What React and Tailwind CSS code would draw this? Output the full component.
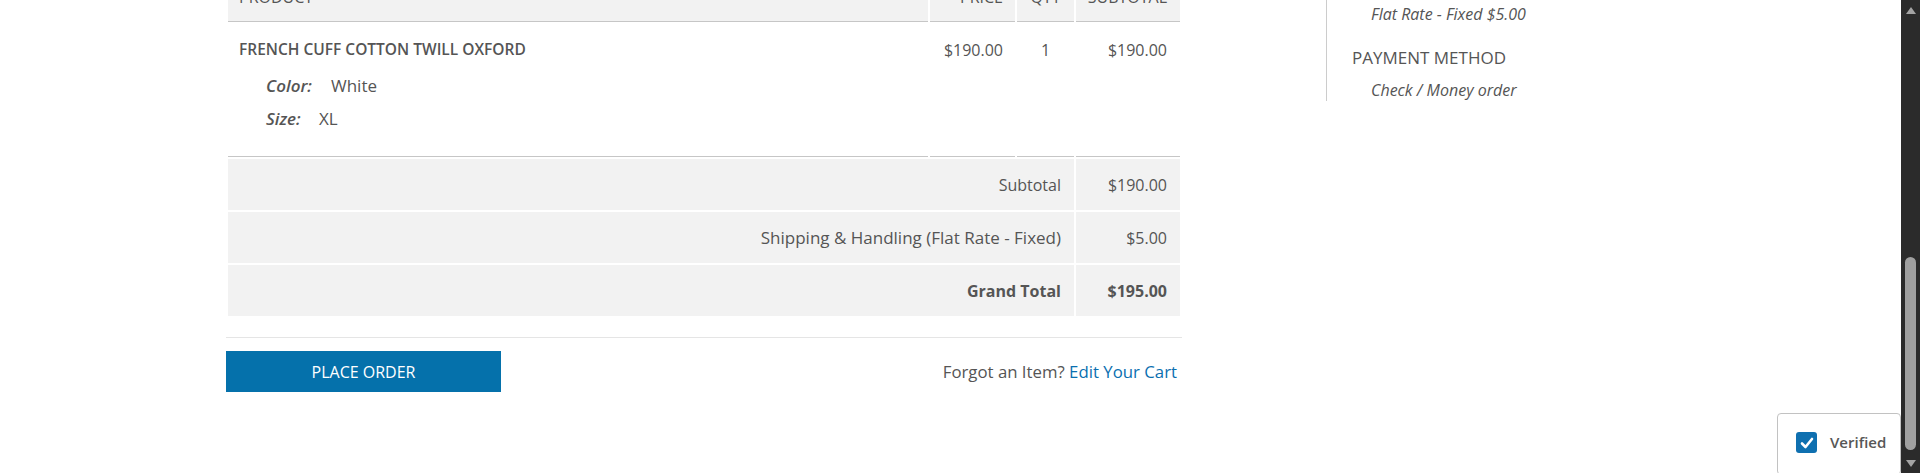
import React from 'react';

const font = { fontFamily: '"Open Sans", "Noto Sans", sans-serif' };

const ProductRow = () => (
  <tr className="bg-white">
    <td className="h-[133px] align-top border-b border-[#c6c6c6] pt-[15px] pl-[11px] pr-3">
      <div className="text-[15.5px] font-semibold leading-[20px] uppercase text-[#555]">
        French Cuff Cotton Twill Oxford
      </div>
      <dl className="mt-[10px] pl-[27px] text-[17px]">
        <div className="flex leading-[33px]">
          <dt className="italic font-semibold w-[65px]">Color:</dt>
          <dd>White</dd>
        </div>
        <div className="flex leading-[33px]">
          <dt className="italic font-semibold w-[53px]">Size:</dt>
          <dd>XL</dd>
        </div>
      </dl>
    </td>
    <td className="align-top border-b border-[#c6c6c6] pt-[15px] pr-[12px] text-right leading-[22px]">$190.00</td>
    <td className="align-top border-b border-[#c6c6c6] pt-[15px] text-center leading-[22px]">1</td>
    <td className="align-top border-b border-[#c6c6c6] pt-[15px] pr-[13px] text-right leading-[22px]">$190.00</td>
  </tr>
);

const TotalRow = ({ label, value, strong, wide }) => (
  <tr className="bg-[#f2f2f2]">
    <th
      colSpan={3}
      className={`h-[51px] pr-[13px] text-right ${strong ? 'font-bold' : 'font-normal'} ${wide ? 'text-[17px]' : ''}`}
    >
      {label}
    </th>
    <td className={`pr-[13px] text-right ${strong ? 'font-bold' : ''}`}>{value}</td>
  </tr>
);

const Scrollbar = () => (
  <div className="w-[19px] h-full bg-[#2b2b2b] flex flex-col items-center shrink-0">
    <svg width="10" height="7" viewBox="0 0 10 7" className="mt-[7px]">
      <polygon points="5,0 10,7 0,7" fill="#a3a3a3" />
    </svg>
    <div className="mt-[243px] w-[11px] h-[193px] rounded-full bg-[#a0a0a0]" />
    <svg width="10" height="7" viewBox="0 0 10 7" className="mt-[10px]">
      <polygon points="0,0 10,0 5,7" fill="#a3a3a3" />
    </svg>
  </div>
);

export default function App() {
  return (
    <div className="relative flex h-[473px] w-full overflow-hidden bg-white text-[#555] text-[16px]" style={font}>
      <div className="flex-1 flex items-start pl-[226px]">
        <div className="w-[956px] -mt-[24px] shrink-0">
          <table className="w-full table-fixed border-separate border-spacing-[2px]">
            <colgroup>
              <col className="w-[700px]" />
              <col className="w-[85px]" />
              <col className="w-[57px]" />
              <col className="w-[104px]" />
            </colgroup>
            <thead>
              <tr className="bg-[#f2f2f2]">
                <th className="h-[44px] align-bottom border-b border-[#c6c6c6] pb-[13px] pl-[11px] text-left font-normal leading-[22px]">PRODUCT</th>
                <th className="align-bottom border-b border-[#c6c6c6] pb-[13px] pr-[12px] text-right font-normal leading-[22px]">PRICE</th>
                <th className="align-bottom border-b border-[#c6c6c6] pb-[13px] text-center font-normal leading-[22px]">QTY</th>
                <th className="align-bottom border-b border-[#c6c6c6] pb-[13px] pr-[13px] text-right font-normal leading-[22px]">SUBTOTAL</th>
              </tr>
            </thead>
            <tbody>
              <ProductRow />
            </tbody>
            <tfoot>
              <TotalRow label="Subtotal" value="$190.00" />
              <TotalRow label="Shipping & Handling (Flat Rate - Fixed)" value="$5.00" wide />
              <TotalRow label="Grand Total" value="$195.00" strong />
            </tfoot>
          </table>

          <div className="mt-[19px] border-t border-[#e5e5e5] pt-[13px] flex items-center justify-between pr-[5px]">
            <button className="w-[275px] h-[41px] bg-[#0571ab] text-white text-[16px] uppercase">
              Place Order
            </button>
            <div className="text-[16.8px]">
              Forgot an Item? <a className="text-[#0a6fb0]">Edit Your Cart</a>
            </div>
          </div>
        </div>

        <aside className="ml-[144px] border-l border-[#cccccc] pl-[25px] pb-[1px] w-[300px]">
          <div className="pl-[19px] pt-[4px] italic text-[16px] leading-[20px]">Flat Rate - Fixed $5.00</div>
          <div className="mt-[23px] leading-[22px] uppercase text-[17px]">Payment Method</div>
          <div className="mt-[11px] pl-[19px] italic text-[16px] leading-[20px]">Check / Money order</div>
        </aside>
      </div>

      <Scrollbar />

      <div className="absolute right-[19px] top-[413px] w-[124px] h-[62px] rounded-[4px] border border-[#c2c2c2] bg-white flex items-start pt-[18px] pl-[18px]">
        <span className="w-[21px] h-[21px] rounded-[3px] bg-[#0f70b0] flex items-center justify-center">
          <svg width="14" height="12" viewBox="0 0 14 12">
            <polyline points="2,6.5 5.5,10 12,2" fill="none" stroke="white" strokeWidth="2.6" strokeLinecap="round" strokeLinejoin="round" />
          </svg>
        </span>
        <span className="ml-[13px] text-[15px] font-semibold leading-[21px] text-[#575757]">Verified</span>
      </div>
    </div>
  );
}
